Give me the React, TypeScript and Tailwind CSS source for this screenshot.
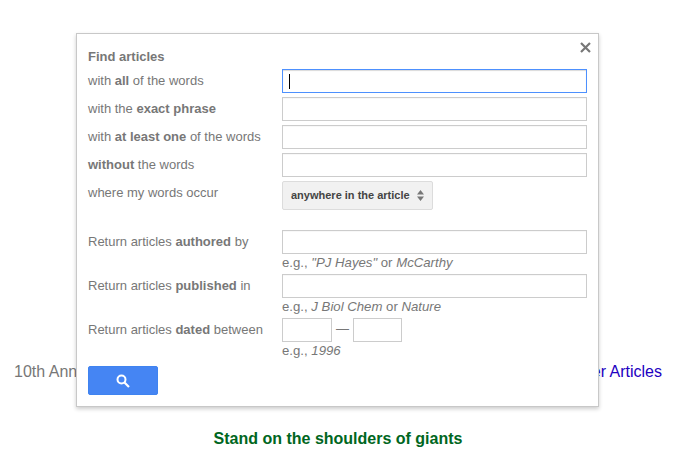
const labelCls = "w-[194px] shrink-0 h-6 leading-6 text-[13px] text-[#777]";
const inputCls = "block h-6 border bg-white outline-none";
const hintCls = "h-5 leading-[17px] text-[13.2px] text-[#777] ml-[194px]";

function Row({ label, focused }: { label: React.ReactNode; focused?: boolean }) {
  return (
    <div className="flex">
      <div className={labelCls}>{label}</div>
      <div className="relative">
        <input
          type="text"
          className={`${inputCls} w-[305px] ${focused ? "border-[#4d90fe] shadow-[inset_0_1px_1px_rgba(0,0,0,0.15)]" : "border-[#ccc] shadow-[inset_0_1px_1px_rgba(0,0,0,0.03)]"}`}
        />
        {focused && <div className="absolute left-[7px] top-[5px] h-[15px] w-px bg-black" />}
      </div>
    </div>
  );
}

function Dialog() {
  return (
    <div className="absolute left-[76px] top-[33px] w-[523px] h-[374px] border border-[#c8c8c8] bg-white pl-[11px] pt-[14px] shadow-[0_2px_4px_rgba(0,0,0,0.2)]">
      <button className="absolute right-[7px] top-[8px] text-[#777]" aria-label="Close">
        <svg width="11" height="11" viewBox="0 0 11 11" className="block">
          <path d="M1 1 10 10M10 1 1 10" stroke="currentColor" strokeWidth="2.2" fill="none" />
        </svg>
      </button>

      <div className="h-[21px] leading-[18px] text-[13px] font-bold text-[#777]">Find articles</div>

      <div className="flex flex-col gap-1">
        <Row focused label={<>with <b>all</b> of the words</>} />
        <Row label={<>with the <b>exact phrase</b></>} />
        <Row label={<>with <b>at least one</b> of the words</>} />
        <Row label={<><b>without</b> the words</>} />
        <div className="flex">
          <div className={labelCls}>where my words occur</div>
          <button className="flex items-center h-[29px] w-[151px] pl-2 rounded-[2px] border border-[#dcdcdc] bg-[#f1f1f1] text-[11px] font-bold text-[#444]">
            anywhere in the article
            <svg width="7" height="11" viewBox="0 0 7 11" className="ml-[7px]">
              <path d="M3.5 0 7 4.5H0ZM0 6.5H7L3.5 11Z" fill="#777" />
            </svg>
          </button>
        </div>
      </div>

      <div className="mt-5">
        <Row label={<>Return articles <b>authored</b> by</>} />
        <div className={hintCls}>e.g., <i>"PJ Hayes"</i> or <i>McCarthy</i></div>
        <Row label={<>Return articles <b>published</b> in</>} />
        <div className={hintCls}>e.g., <i>J Biol Chem</i> or <i>Nature</i></div>
        <div className="flex">
          <div className={labelCls}>Return articles <b>dated</b> between</div>
          <input type="text" className={`${inputCls} border-[#ccc] w-[50px]`} />
          <span className="w-[21px] text-center leading-[21px] text-[13px] text-[#777]">—</span>
          <input type="text" className={`${inputCls} border-[#ccc] w-[49px]`} />
        </div>
        <div className={hintCls}>e.g., <i>1996</i></div>
      </div>

      <button className="mt-1 flex h-[29px] w-[70px] items-center justify-center rounded-[2px] border border-[#3f83f0] bg-[#4585f3]" aria-label="Search">
        <svg width="14" height="14" viewBox="0 0 14 14" className="block">
          <circle cx="5.5" cy="5.5" r="4" stroke="#fff" strokeWidth="2" fill="none" />
          <path d="M8.5 8.5 13 13" stroke="#fff" strokeWidth="2.2" />
        </svg>
      </button>
    </div>
  );
}

export default function App() {
  return (
    <div className="relative h-[473px] w-[688px] overflow-hidden bg-white font-['Liberation_Sans',Arial,sans-serif]">
      <div className="w-[676px] pt-[361px]">
        <div className="flex justify-between px-[14px] text-base leading-[22px] text-[#777]">
          <span>10th Anniversary</span>
          <a className="text-[#2200c1]">Older Articles</a>
        </div>
        <div className="mt-[46px] text-center text-base font-bold leading-5 text-[#006621]">
          Stand on the shoulders of giants
        </div>
      </div>
      <Dialog />
    </div>
  );
}
